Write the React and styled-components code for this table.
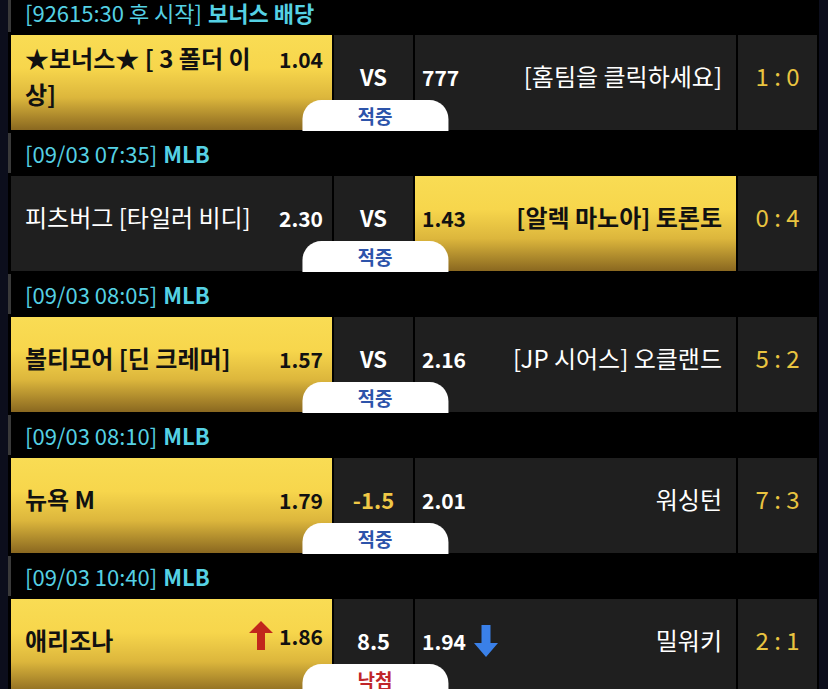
import React from "react";
import styled, { createGlobalStyle, css } from "styled-components";

const GlobalStyle = createGlobalStyle`
  html, body {
    margin: 0;
    padding: 0;
    background: #0c0e1c;
  }
  body {
    font-family: "Noto Sans CJK KR", "Noto Sans", sans-serif;
    overflow: hidden;
  }
`;

const yellow = css`
  background: linear-gradient(180deg, #f9dc54 0%, #f7d64c 35%, #dcb63c 66%, #8a6820 100%);
  color: #111;
`;

const List = styled.div`
  width: 811px;
  margin: -11px 0 0 8px;
  padding: 0 2px 0 3px;
  box-sizing: border-box;
  background: #000;
`;

const Header = styled.div`
  height: 46px;
  display: flex;
  align-items: center;
`;

const HeaderLabel = styled.div`
  height: 40px;
  margin-left: -3px;
  padding-left: 14px;
  border-left: 3px solid #3a3a3a;
  display: flex;
  align-items: center;
  font-size: 22px;
  color: #55d1e4;
  b {
    font-weight: 700;
    margin-left: 6px;
  }
`;

const Match = styled.div`
  display: grid;
  grid-template-columns: 321px 79px 321px 79px;
  column-gap: 2px;
  height: 95px;
`;

const TeamCell = styled.div`
  display: flex;
  align-items: center;
  box-sizing: border-box;
  padding: ${({ $away }) => ($away ? "0 14px 14px 7px" : "0 9px 14px 14px")};
  background: #1f1f1f;
  color: #fff;
  ${({ $picked }) => $picked && yellow}
`;

const TeamLine = styled.div`
  display: flex;
  align-items: baseline;
  width: 100%;
  gap: 10px;
  flex-direction: ${({ $away }) => ($away ? "row-reverse" : "row")};
`;

const TeamName = styled.div`
  flex: 1;
  font-size: 24px;
  line-height: 36px;
  font-weight: ${({ $picked }) => ($picked ? 700 : 400)};
  text-align: ${({ $away }) => ($away ? "right" : "left")};
`;

const Odds = styled.div`
  display: flex;
  align-items: center;
  gap: ${({ $away }) => ($away ? "8px" : "6px")};
  font-size: 21px;
  font-weight: 600;
  svg {
    align-self: center;
  }
`;

const MidCell = styled.div`
  position: relative;
  display: flex;
  align-items: center;
  justify-content: center;
  box-sizing: border-box;
  padding-bottom: 14px;
  background: #1f1f1f;
  font-size: 22px;
  font-weight: 700;
  color: ${({ $handicap }) => ($handicap ? "#f0c846" : "#fff")};
`;

const Badge = styled.div`
  position: absolute;
  z-index: 2;
  left: 50%;
  bottom: -1px;
  transform: translateX(-49%);
  width: 146px;
  height: 31px;
  border-radius: 19px 19px 0 0;
  background: #fff;
  display: flex;
  align-items: center;
  justify-content: center;
  font-size: 19px;
  font-weight: 700;
  color: ${({ $lost }) => ($lost ? "#c0262a" : "#2d54aa")};
`;

const ScoreCell = styled.div`
  display: flex;
  align-items: center;
  justify-content: center;
  box-sizing: border-box;
  padding-bottom: 14px;
  background: #1f1f1f;
  color: #e9c440;
  font-size: 24px;
  white-space: pre;
`;

const UpArrow = () => (
  <svg width="24" height="29" viewBox="0 0 24 29">
    <polygon points="12,0 24,12 16,12 16,29 8,29 8,12 0,12" fill="#c1261c" />
  </svg>
);

const DownArrow = () => (
  <svg width="24" height="32" viewBox="0 0 24 32">
    <polygon points="7.5,0 16.5,0 16.5,18 24,18 12,32 0,18 7.5,18" fill="#3a80e8" />
  </svg>
);

const games = [
  {
    time: "[92615:30 후 시작]",
    league: "보너스 배당",
    home: "★보너스★ [ 3 폴더 이 상]",
    homeOdds: "1.04",
    mid: "VS",
    away: "[홈팀을 클릭하세요]",
    awayOdds: "777",
    score: "1 : 0",
    pick: "home",
    result: "적중",
  },
  {
    time: "[09/03 07:35]",
    league: "MLB",
    home: "피츠버그 [타일러 비디]",
    homeOdds: "2.30",
    mid: "VS",
    away: "[알렉 마노아] 토론토",
    awayOdds: "1.43",
    score: "0 : 4",
    pick: "away",
    result: "적중",
  },
  {
    time: "[09/03 08:05]",
    league: "MLB",
    home: "볼티모어 [딘 크레머]",
    homeOdds: "1.57",
    mid: "VS",
    away: "[JP 시어스] 오클랜드",
    awayOdds: "2.16",
    score: "5 : 2",
    pick: "home",
    result: "적중",
  },
  {
    time: "[09/03 08:10]",
    league: "MLB",
    home: "뉴욕 M",
    homeOdds: "1.79",
    mid: "-1.5",
    handicap: true,
    away: "워싱턴",
    awayOdds: "2.01",
    score: "7 : 3",
    pick: "home",
    result: "적중",
  },
  {
    time: "[09/03 10:40]",
    league: "MLB",
    home: "애리조나",
    homeOdds: "1.86",
    homeUp: true,
    mid: "8.5",
    away: "밀워키",
    awayOdds: "1.94",
    awayDown: true,
    score: "2 : 1",
    pick: "home",
    result: "낙첨",
  },
];

const App = () => {
  return (
    <>
      <GlobalStyle />
      <List>
        {games.map((g, i) => {
          const homePicked = g.pick === "home";
          const awayPicked = g.pick === "away";
          return (
            <React.Fragment key={i}>
              <Header>
                <HeaderLabel>
                  {g.time}
                  <b>{g.league}</b>
                </HeaderLabel>
              </Header>
              <Match>
                <TeamCell $picked={homePicked}>
                  <TeamLine>
                    <TeamName $picked={homePicked}>{g.home}</TeamName>
                    <Odds>
                      {g.homeUp && <UpArrow />}
                      {g.homeOdds}
                    </Odds>
                  </TeamLine>
                </TeamCell>
                <MidCell $handicap={g.handicap}>
                  {g.mid}
                  <Badge $lost={g.result === "낙첨"}>{g.result}</Badge>
                </MidCell>
                <TeamCell $away $picked={awayPicked}>
                  <TeamLine $away>
                    <TeamName $away $picked={awayPicked}>{g.away}</TeamName>
                    <Odds $away>
                      {g.awayOdds}
                      {g.awayDown && <DownArrow />}
                    </Odds>
                  </TeamLine>
                </TeamCell>
                <ScoreCell>{g.score}</ScoreCell>
              </Match>
            </React.Fragment>
          );
        })}
      </List>
    </>
  );
};

export default App;
